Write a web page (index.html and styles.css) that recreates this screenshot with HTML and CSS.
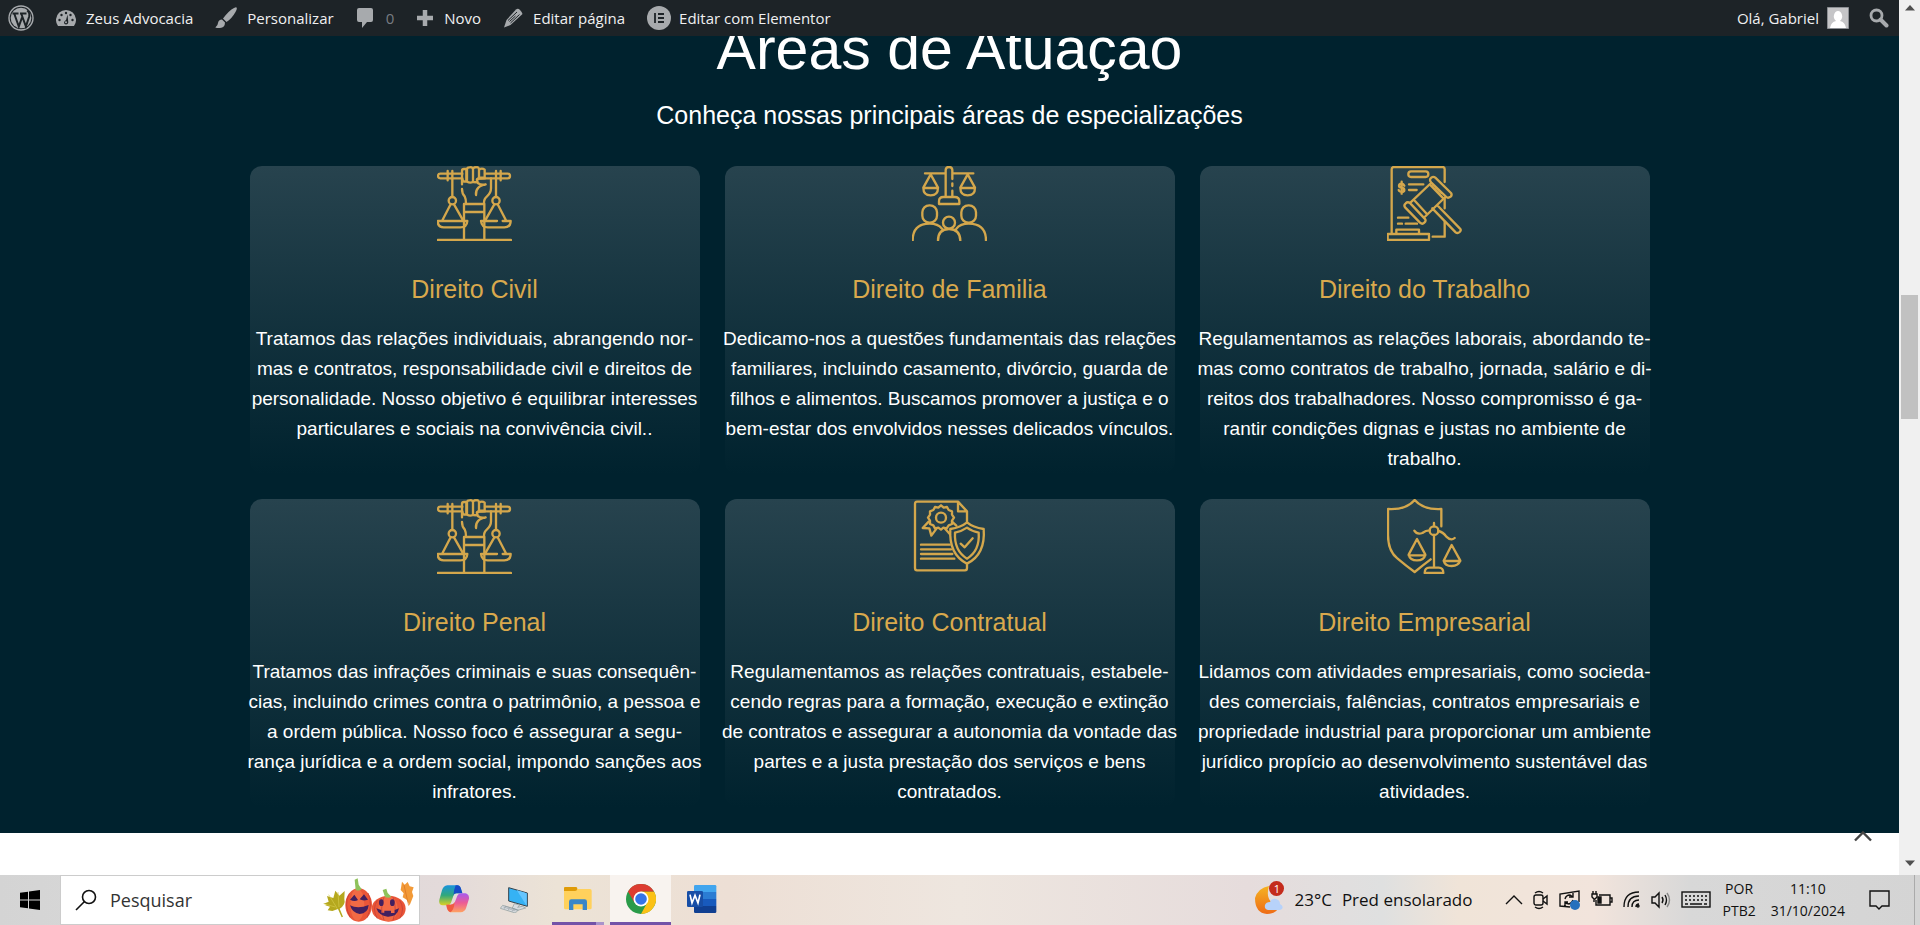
FILE: index.html
```html
<!DOCTYPE html>
<html lang="pt-BR">
<head>
<meta charset="utf-8">
<title>Zeus Advocacia</title>
<link rel="stylesheet" href="styles.css">
</head>
<body>
<svg class="defs" aria-hidden="true">
  <symbol id="hand-scales" viewBox="52 33 225 225">
    <path d="M128 56H62a7 7 0 0 0 0 14h66M196 56h68a7 7 0 0 1 0 14h-84M84 48v28M98 48v78M229 48v78M243 48v28"/>
    <path d="M127 48q0-6 6-6h7v38h-7q-6-6-6-12zM142 44q0-8 9-7 7-2 9 6v38q-9 4-18-1zM160 42q2-7 9-5 9-2 9 7v24l-6 5v8q-7 2-12-1M178 44q9-6 17 0v24h-17"/>
    <path d="M196 70q-20 0-24 3l2 11q12 8 24 4-16 3-22 10-8 8-7 22M127 74v14M127 102q0 14 8 22 4 8 4 22M214 70v30q0 14-12 24-10 8-9 22"/>
    <path d="M133 147h61v24h-61zM133 171v84M194 171v84M54 255h220"/>
    <circle cx="98" cy="137" r="11"/><circle cx="229" cy="137" r="11"/>
    <path d="M93 148l-26 50M103 148l26 46M224 148l-26 46M234 148l26 50M133 198H54q0 19 18 19h50q20 0 21-19h-12M232 198h-48q2 19 20 19h50q19 0 19-19h-24"/>
  </symbol>
  <symbol id="family" viewBox="52 33 225 225">
    <path d="M173 72V46q0-10-10-10t-10 10v79M153 55H91M173 55h63M173 85v8M173 107v18M133 147v-8q0-13 13-13h34q14 0 14 13v8z"/>
    <path d="M108 58L86 98q0 23 22 23t22-23zM86 99h44M219 58l-22 40q0 23 22 23t22-23zM197 99h44"/>
    <rect x="83" y="151" width="44" height="52" rx="21"/><rect x="200" y="151" width="44" height="52" rx="21"/><circle cx="163" cy="203" r="18"/>
    <path d="M54 257q0-51 51-51 25 0 37 15M185 221q12-15 37-15 52 0 52 51M130 257q0-35 33-35t34 35"/>
  </symbol>
  <symbol id="gavel-doc" viewBox="52 33 225 225">
    <path d="M66 233V43q0-7 7-7h146q6 0 6 7v38M225 130v30M225 200v45h-36M54 237h124v18H54zM80 236v-12h68v12"/>
    <rect x="116" y="49" width="60" height="17" rx="8"/>
    <path d="M118 88h43M118 105h23M85 188h31M85 206h12M108 206h34M96 80v36M104 92q-3-7-9-6-7 1-7 6 0 5 8 6 8 1 8 7 0 6-8 6-7 0-9-6"/>
    <path d="M185 83q-8-8 0-15 6-5 12 0l47 46q4 6-1 11-8 6-13 1zM108 145q6-6 14 0l43 46q6 6-1 12-6 6-13 0l-44-45q-6-7 1-13zM123 142l58-55M165 186l62-60M136 138l35 38M184 92l34 35M200 98l15 15M202 150l69 71q5 4-1 10-6 6-12 1l-70-72"/>
  </symbol>
  <symbol id="contract" viewBox="52 30 225 225">
    <path d="M217 98V67l-27-29H67q-6 0-6 7v192q0 7 6 7h144q6 0 6-7v-12M190 40v27h25"/>
    <path d="M139 49l8 7 10-2 5 9 10 4v10l6 9-6 9v10l-10 4-6 9-10-2-7 6-8-6-10 2-5-9-10-4v-10l-6-9 6-9V67l10-4 5-9 10 2z"/>
    <circle cx="139" cy="86" r="15"/>
    <path d="M102 98l-18 19 20 1 6 22 16-22M150 118l16 18M172 98l13 12M79 167h86M79 181h90M79 195h94M79 209h100"/>
    <path d="M217 100q-18 15-50 20-5 76 50 104 56-28 50-104-32-5-50-20zM217 116q-14 10-36 15-3 54 36 78 39-24 35-78-22-5-35-15zM198 164l12 11 24-27"/>
  </symbol>
  <symbol id="shield-scales" viewBox="52 30 225 225">
    <path d="M215 112V60q-54 3-80-27-25 30-80 27v78q0 48 28 70 26 22 52 41 24-20 48-38"/>
    <circle cx="193" cy="125" r="13"/>
    <path d="M193 102v10M193 138v97M180 124q-12 0-22 8-16 6-24-7M206 126q14 3 24 17 14 14 25 4M165 252q0-16 14-16h28q14 0 14 16z"/>
    <path d="M142 150l-25 47q4 17 25 17t25-17zM117 199h50M246 168l-24 47q4 16 24 16t26-16zM222 216h50"/>
  </symbol>
</svg>

<div class="desktop">
  <div class="browser">
    <div class="page">
      <nav class="adminbar" aria-label="Barra de ferramentas">
        <a href="#" class="wp-logo" aria-label="WordPress"><svg width="26" height="26" viewBox="0 0 26 26"><circle cx="13" cy="13" r="12" fill="none" stroke="#a7aaad" stroke-width="1.4"/><circle cx="13" cy="13" r="10.3" fill="#a7aaad"/><path d="M4.5 8.5h6M12 8.5h6.500M6.200 8.500l4.600 13 3.200-9M13.200 8.500l4.700 13 3.300-10q.8-4-2-6" fill="none" stroke="#1d2327" stroke-width="2"/></svg></a>
        <a href="#" class="site"><svg width="20" height="20" viewBox="0 0 20 20"><path d="M2 18a10 10 0 1 1 16 0z" fill="#a7aaad"/><g fill="#1d2327"><circle cx="3.500" cy="12" r="1.200"/><circle cx="5.500" cy="7" r="1.200"/><circle cx="10" cy="5" r="1.200"/><circle cx="14.500" cy="7" r="1.200"/><circle cx="16.500" cy="12" r="1.200"/><path d="M11.500 6.500l.8 8q-.3 2-2.300 2t-2-2q.2-1.500 2-2.500z"/></g><circle cx="10" cy="14.300" r="1" fill="#a7aaad"/></svg>Zeus Advocacia</a>
        <a href="#" class="customize"><svg width="22" height="22" viewBox="0 0 22 22" fill="#a7aaad"><path d="M21.500.5q1 1-1 4.500-4 7-9 10l-3.500-3.500Q14 3.500 19 1q2-1 2.500-.5zM7 12.500l3 3q0 5-5 5.500-2.500.4-4.700-.6Q3 18.500 3 16q.5-3.500 4-3.500z"/></svg>Personalizar</a>
        <a href="#" class="comments"><svg width="18" height="22" viewBox="0 0 18 22"><path d="M3 1h12q2 0 2 2v10q0 2-2 2h-4l-5 6v-6H3q-2 0-2-2V3q0-2 2-2z" fill="#a7aaad"/></svg>0</a>
        <a href="#" class="new"><svg width="18" height="18" viewBox="0 0 18 18"><path d="M9 1v16M1 9h16" stroke="#a7aaad" stroke-width="4.500"/></svg>Novo</a>
        <a href="#" class="edit"><svg width="20" height="20" viewBox="0 0 20 20"><path d="M13 1.500Q15 0 17 2t2.500 4L7.500 17 1 19.500 3.500 12z" fill="#a7aaad"/><path d="M5 12.500l9-8.500M7.500 15l9-8.500M6.500 13.500l6-5.500" stroke="#1d2327" fill="none"/></svg>Editar página</a>
        <a href="#" class="elementor"><svg width="24" height="24" viewBox="0 0 24 24"><circle cx="12" cy="12" r="12" fill="#a7aaad"/><path d="M8 7v10M11 8h6M11 12h6M11 16h6" stroke="#1d2327" stroke-width="1.800"/></svg>Editar com Elementor</a>
        <a href="#" class="account">Olá, Gabriel<svg width="22" height="22" viewBox="0 0 22 22"><path d="M.5.500h21v21H.5z" fill="#c5c5c7" stroke="#8c8f94"/><path d="M3 21q1-6 6-7-3-3-2-6 1-4 4-4t4 4q1 3-2 6 5 1 6 7z" fill="#fff"/></svg></a>
        <a href="#" class="find" aria-label="Pesquisar no site"><svg width="20" height="20" viewBox="0 0 20 20" fill="none" stroke="#a7aaad"><circle cx="7.500" cy="7.500" r="5.500" stroke-width="2.800"/><path d="M11.500 11.500l6 6" stroke-width="4" stroke-linecap="round"/></svg></a>
      </nav>

      <main class="areas">
        <h1>Áreas de Atuação</h1>
        <p class="lead">Conheça nossas principais áreas de especializações</p>
        <div class="grid">
          <article class="card"><svg class="icon"><use href="#hand-scales"/></svg><h2>Direito Civil</h2>
            <p>Tratamos das relações individuais, abrangendo nor-<br>mas e contratos, responsabilidade civil e direitos de<br>personalidade. Nosso objetivo é equilibrar interesses<br>particulares e sociais na convivência civil..</p></article>
          <article class="card"><svg class="icon"><use href="#family"/></svg><h2>Direito de Familia</h2>
            <p>Dedicamo-nos a questões fundamentais das relações<br>familiares, incluindo casamento, divórcio, guarda de<br>filhos e alimentos. Buscamos promover a justiça e o<br>bem-estar dos envolvidos nesses delicados vínculos.</p></article>
          <article class="card"><svg class="icon"><use href="#gavel-doc"/></svg><h2>Direito do Trabalho</h2>
            <p>Regulamentamos as relações laborais, abordando te-<br>mas como contratos de trabalho, jornada, salário e di-<br>reitos dos trabalhadores. Nosso compromisso é ga-<br>rantir condições dignas e justas no ambiente de<br>trabalho.</p></article>
          <article class="card"><svg class="icon"><use href="#hand-scales"/></svg><h2>Direito Penal</h2>
            <p>Tratamos das infrações criminais e suas consequên-<br>cias, incluindo crimes contra o patrimônio, a pessoa e<br>a ordem pública. Nosso foco é assegurar a segu-<br>rança jurídica e a ordem social, impondo sanções aos<br>infratores.</p></article>
          <article class="card"><svg class="icon"><use href="#contract"/></svg><h2>Direito Contratual</h2>
            <p>Regulamentamos as relações contratuais, estabele-<br>cendo regras para a formação, execução e extinção<br>de contratos e assegurar a autonomia da vontade das<br>partes e a justa prestação dos serviços e bens<br>contratados.</p></article>
          <article class="card"><svg class="icon"><use href="#shield-scales"/></svg><h2>Direito Empresarial</h2>
            <p>Lidamos com atividades empresariais, como socieda-<br>des comerciais, falências, contratos empresariais e<br>propriedade industrial para proporcionar um ambiente<br>jurídico propício ao desenvolvimento sustentável das<br>atividades.</p></article>
        </div>
      </main>
      <a href="#" class="to-top" aria-label="Voltar ao topo"><svg width="18" height="12" viewBox="0 0 18 12"><path d="M1 10.500l8-8 8 8" fill="none" stroke="#444" stroke-width="2.400"/></svg></a>
    </div>
    <div class="scrollbar">
      <svg width="10" height="6" viewBox="0 0 10 6"><path d="M0 5.500L5 0l5 5.500z" fill="#505050"/></svg>
      <div class="track"><div class="thumb"></div></div>
      <svg width="10" height="6" viewBox="0 0 10 6"><path d="M0 .5L5 6l5-5.500z" fill="#505050"/></svg>
    </div>
  </div>

  <footer class="taskbar">
    <button class="start" aria-label="Iniciar"><svg width="20" height="20" viewBox="0 0 20 20"><path d="M0 2.800L8 1.700v7.800H0zM9 1.500L20 0v9.500H9zM0 10.500h8v7.800l-8-1.100zM9 10.500h11V20L9 18.500z"/></svg></button>
    <label class="search">
      <svg width="22" height="22" viewBox="0 0 22 22" fill="none" stroke="#111" stroke-width="1.600"><circle cx="14" cy="8" r="6.500"/><path d="M9.500 12.500L1 21"/></svg>
      <input type="text" placeholder="Pesquisar" aria-label="Pesquisar">
      <svg width="92" height="44" viewBox="0 5 276 132">
        <path d="M3 83l17-7-5-17 19 6 6-22 12 15 16-14-1 24q5 17-14 29l10 24-4 2-11-25-17 6-14-2 7-11-14-4 4-4z" fill="#b5a81e"/><path d="M7 83l33 9M20 55l26 42M48 47l3 45" stroke="#d6cb4b" stroke-width="2" fill="none"/>
        <path d="M240 16l8 9 9-8 6 13 12 3-5 14 4 12-11 28-9-17-12-7 3-12-9-10z" fill="#f29a38"/><path d="M246 26l14 62" stroke="#d9701f" stroke-width="2"/>
        <ellipse cx="110" cy="86" rx="40" ry="50" fill="#ea5638"/><ellipse cx="106" cy="85" rx="21" ry="48" fill="#f26a45"/><path d="M82 52q-18 32 3 72M138 50q16 36-3 74" stroke="#bd3838" stroke-width="2" fill="none"/><path d="M101 41L98 10l9-4 3 19 9 14q-8 6-18 2z" fill="#8fc25b"/>
        <path d="M84 70l13-15 11 16q-10 6-24-1zM113 69l13-15 12 16q-14 5-25-1zM84 87q24 12 56-1-2 25-27 27-22-3-29-26z" fill="#43205f"/>
        <ellipse cx="200" cy="97" rx="51" ry="39" fill="#ea5638"/><ellipse cx="198" cy="97" rx="29" ry="38" fill="#f26a45"/><path d="M166 72q-17 25 0 55M233 72q17 25 0 55M186 63q-14 33 0 68M213 63q13 33 0 68" stroke="#bd3838" stroke-width="2" fill="none"/><path d="M189 62l-7-21 11-4 4 13 11 11q-8 6-19 1z" fill="#8fc25b"/>
        <ellipse cx="178" cy="79" rx="7" ry="10" fill="#43205f"/><ellipse cx="211" cy="79" rx="7" ry="10" fill="#43205f"/><path d="M163 96l15 5v8h9v-6h20v7h11v-9l13-5q-5 26-34 25-27-3-34-25z" fill="#43205f"/>
      </svg>
    </label>
    <div class="apps">
      <button aria-label="Copilot"><svg width="30" height="28" viewBox="0 0 90 84"><defs><linearGradient id="cg1" x2="0" y2="1"><stop stop-color="#1993dd"/><stop offset=".5" stop-color="#31a87b"/><stop offset="1" stop-color="#ddd323"/></linearGradient><linearGradient id="cg2" x2="0" y2="1"><stop stop-color="#a65bef"/><stop offset=".5" stop-color="#ec5b95"/><stop offset="1" stop-color="#ffa260"/></linearGradient></defs><path d="M25 1h30q9 1 12 14l3 10H52q-7 0-9 8l-7 20q-3 8-12 8H11Q-2 59 1 44L9 16Q13 3 25 1z" fill="url(#cg1)"/><path d="M45 1h12q8 2 10 14l3 10H52q-8 0-9 8 1-18 7-32z" fill="#164bc7"/><path d="M65 82H36q-10-1-12-12l-2-11h13q10 0 13-9l7-18q3-7 13-7h11q12 3 11 16l-9 29q-4 11-16 12z" fill="url(#cg2)"/><path d="M22 59h13q9 0 12-8-2 24-13 31-7-3-10-12z" fill="#f05b40"/></svg></button>
      <button aria-label="Este computador"><svg width="30" height="28" viewBox="0 0 90 84"><path d="M26 8l56 16v40L26 48z" fill="#35b2f4" stroke="#33424c" stroke-width="3"/><path d="M50 15l30 10v37z" fill="#65c5ff"/><path d="M43 56l16 4-6 7 14-3 10 5-24 7-16-7zM8 61l47 14-9 9-45-14z" fill="#d9dce0" stroke="#899" stroke-width="2"/><path d="M10 66l37 12M14 63l37 12M17 64l-5 8M29 68l-5 8M41 72l-5 8" stroke="#8f989f" stroke-width="1.500"/></svg></button>
      <button class="open stacked" aria-label="Explorador de Arquivos"><svg width="28" height="24" viewBox="0 0 84 72"><path d="M0 4q0-4 4-4h32l4 6h38q5 0 5 5v51q0 5-5 5H4q-4 0-4-5z" fill="#ffd15c"/><path d="M0 4q0-4 4-4h32q4 0 4 5-1 7-7 7H0z" fill="#df9b08"/><path d="M15 69V44q0-7 7-7h40q7 0 7 7v25H56V52H28v17z" fill="#3786c8"/></svg></button>
      <button class="open active" aria-label="Google Chrome"><svg width="30" height="30" viewBox="0 0 30 30"><circle cx="15" cy="15" r="15" fill="#2a9b49"/><path d="M15 15V7.500h13A15 15 0 0 1 15 30l6-11z" fill="#fbc116"/><path d="M15 7.500h13A15 15 0 0 0 2 7.500l6.500 11.300z" fill="#dd3c31"/><circle cx="15" cy="15" r="7.500" fill="#fff"/><circle cx="15" cy="15" r="5.800" fill="#3574e8"/></svg></button>
      <button aria-label="Microsoft Word"><svg width="30" height="28" viewBox="0 0 90 84"><path d="M21 4q0-4 4-4h59q4 0 4 4v17H21z" fill="#41a5ee"/><path d="M21 21h67v21H21z" fill="#2b7cd3"/><path d="M21 42h67v21H21z" fill="#185abd"/><path d="M21 63h67v17q0 4-4 4H25q-4 0-4-4z" fill="#103f91"/><rect y="18" width="48" height="48" rx="4" fill="#174ea6"/><path d="M9 29l6 25 9-23 9 23 6-25" fill="none" stroke="#fff" stroke-width="5"/></svg></button>
    </div>
    <button class="weather"><span class="sun"><svg width="30" height="30" viewBox="0 0 30 30"><defs><linearGradient id="sg" x2="0" y2="1"><stop stop-color="#f5b321"/><stop offset="1" stop-color="#ee6b16"/></linearGradient></defs><path d="M15 1Q4 3 1 13q0 15 12 16 10 0 13-9-16-2-11-19z" fill="url(#sg)"/><path d="M14 25q-4-1-3-5 1-3 5-3 2-4 6-3 4 1 4 5 4 2 2 5l-2 1z" fill="#b7d2fa"/></svg><span class="badge">1</span></span><span>23°C</span><span>Pred ensolarado</span></button>
    <div class="tray">
      <button aria-label="Mostrar ícones ocultos"><svg width="18" height="20" viewBox="0 0 18 20"><path d="M1 14l8-8 8 8"/></svg></button>
      <button aria-label="Reunir agora"><svg width="16" height="20" viewBox="0 0 16 20"><rect x="1" y="5" width="9" height="10" rx="2"/><path d="M10 9l4-3v8l-4-3M2 3q4-3 8 0M2 17q4 3 8 0"/></svg></button>
      <button aria-label="Atualizações"><svg width="22" height="20" viewBox="0 0 22 20"><path d="M11 17L1 16V4l19-3v11M6 9q1-4 5-4l3 2M14 3v4h-4M14 10q-1 3-4 4l-4-1M6 16v-4h3"/><circle cx="16" cy="15" r="5" fill="#2670bd" stroke="none"/></svg></button>
      <button aria-label="Bateria"><svg width="22" height="20" viewBox="0 0 22 20"><path d="M8 5h11v10H5v-5M19 8h2v4h-2M2 1v3M5 1v3M1 4h5v3L4 9H3L1 7zM3 9v3"/><path d="M7 7h3v6H7z" fill="#111"/></svg></button>
      <button aria-label="Rede sem fio"><svg width="18" height="20" viewBox="0 0 18 20"><path d="M1 17Q1 2 16 2M5 17Q5 6 16 6M9 17q0-7 7-7M13 17q0-3 3-3"/><circle cx="15" cy="16" r="1"/></svg></button>
      <button aria-label="Volume"><svg width="20" height="20" viewBox="0 0 20 20"><path d="M1 7h3l4-4v14l-4-4H1zM11 7q2 3 0 6M14 5q3 5 0 10"/><path d="M16 3q5 7 0 14" stroke="#888"/></svg></button>
      <button aria-label="Teclado"><svg width="30" height="20" viewBox="0 0 30 20"><rect x="1" y="2" width="28" height="15"/><path d="M4 6h22M4 10h22" stroke-dasharray="2 2"/><path d="M4 14h3M9 14h12M23 14h3"/></svg></button>
    </div>
    <button class="stack lang"><span>POR</span><span>PTB2</span></button>
    <button class="stack clock"><span>11:10</span><span>31/10/2024</span></button>
    <button class="notify" aria-label="Notificações"><svg width="22" height="22" viewBox="0 0 22 22"><path d="M1 2h19v15h-7l-3 3-3-3H1z" fill="none" stroke="#111" stroke-width="1.400"/></svg></button>
    <div class="peek"></div>
  </footer>
</div>
</body>
</html>
```
FILE: styles.css
```css
* { box-sizing: border-box; }
body { margin: 0; font-family: "Liberation Sans", Arial, sans-serif; color: #fff; background: #fff; }
h1, h2, p { margin: 0; font-weight: 400; }
a { color: inherit; text-decoration: none; }
button { border: 0; padding: 0; background: none; font: inherit; color: inherit; display: flex; align-items: center; justify-content: center; }
svg { display: block; flex: none; }
.defs { position: absolute; width: 0; height: 0; }

.desktop { height: 100vh; display: flex; flex-direction: column; overflow: hidden; }
.browser { flex: 1; min-height: 0; display: flex; }
.page { flex: 1; min-width: 0; overflow: hidden; background: #fff; }

.adminbar { height: 36px; display: flex; align-items: center; background: #1d2327; color: #f0f0f1; font: 15px/34px "Open Sans", "Noto Sans", sans-serif; padding: 0 8px; white-space: nowrap; }
.adminbar a { display: flex; align-items: center; gap: 10px; margin-right: 22px; }
.adminbar .comments { color: #787c82; gap: 12px; }
.adminbar .elementor { gap: 8px; }
.adminbar .account { margin-left: auto; margin-right: 20px; gap: 8px; }
.adminbar .find { margin-right: 2px; }

.areas { background: #00222e; padding-bottom: 26px; text-align: center; overflow: hidden; }
.areas h1 { margin-top: -17px; font-size: 59px; line-height: 60px; }
.lead { margin-top: 17px; font-size: 25px; line-height: 38px; }
.grid { max-width: 1400px; margin: 32px auto 0; display: grid; grid-template-columns: repeat(3, 1fr); gap: 25px; }
.card { border-radius: 12px; background: linear-gradient(#27434e, #00222e); white-space: nowrap; }
.icon { width: 75px; height: 75px; margin: 0 auto; fill: none; stroke: #d4a74c; stroke-width: 7; stroke-linejoin: round; stroke-linecap: round; }
.card h2 { margin-top: 33px; color: #d9a94d; font-size: 25px; line-height: 30px; }
.card p { margin: 20px -5px 0; font-size: 19px; line-height: 30px; }
.to-top { position: relative; display: block; width: 18px; margin: -3px 27px 0 auto; }

.scrollbar { width: 21px; background: #f0f0f0; display: flex; flex-direction: column; align-items: center; padding: 5px 0 9px; }
.track { flex: 1; width: 17px; display: flex; flex-direction: column; padding-top: 284px; }
.thumb { height: 22%; background: #c1c1c1; }

.taskbar { height: 50px; display: flex; align-items: stretch; color: #111; font: 17px/24px "Open Sans", "Noto Sans", sans-serif; white-space: nowrap; background: linear-gradient(90deg, #d4d4d4 0, #d6d6d6 4%, #e3dada 23%, #ece3d6 29%, #eddfd5 38%, #eee6df 50%, #e6dcdc 65%, #dfe0e0 72%, #f0e4d8 76%, #f2e4dc 83%, #d8d8d8 88%, #d4d4d4 100%); }
.start { width: 60px; }
.search { width: 360px; display: flex; align-items: center; background: #fff; border: 1px solid #ccc; padding: 0 5px 0 14px; font-size: 18px; }
.search input { flex: 1; min-width: 0; border: 0; outline: 0; padding: 0 0 0 13px; background: none; font: inherit; color: #333; }
.search input::placeholder { color: #333; opacity: 1; }
.apps { display: flex; padding-left: 3px; }
.apps button { width: 61px; border-bottom: 3px solid transparent; }
.apps .open { border-bottom-color: #7352a8; }
.apps .active { background: #f8f3ef; }
.apps .stacked { width: 52px; margin: 0 6px 0 7px; border-image: linear-gradient(90deg, #7352a8 80%, #a993cb 80%) 3; }
.weather { margin-left: auto; gap: 10px; }
.sun { position: relative; }
.badge { position: absolute; right: 0; top: -4px; width: 15px; height: 15px; border-radius: 50%; background: #c42b1c; color: #fff; font-size: 11px; line-height: 15px; }
.tray { display: flex; align-items: center; gap: 10px; margin-left: 32px; fill: none; stroke: #111; stroke-width: 1.4; }
.stack { flex-direction: column; font-size: 14px; line-height: 22px; }
.lang { margin-left: 12px; }
.clock { margin-left: 15px; }
.notify { margin-left: 24px; }
.peek { width: 6px; margin-left: 23px; border-left: 1px solid #aaa; }
```
